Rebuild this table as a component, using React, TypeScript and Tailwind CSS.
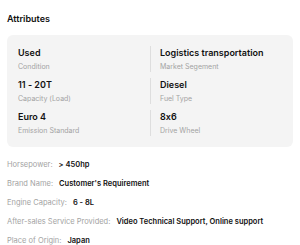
const specs = [
  { value: "Used", label: "Condition" },
  { value: "Logistics transportation", label: "Market Segement" },
  { value: "11 - 20T", label: "Capacity (Load)" },
  { value: "Diesel", label: "Fuel Type" },
  { value: "Euro 4", label: "Emission Standard" },
  { value: "8x6", label: "Drive Wheel" },
];

const details = [
  { label: "Horsepower:", value: "> 450hp" },
  { label: "Brand Name:", value: "Customer's Requirement" },
  { label: "Engine Capacity:", value: "6 - 8L" },
  { label: "After-sales Service Provided:", value: "Video Technical Support, Online support" },
  { label: "Place of Origin:", value: "Japan" },
];

export default function App() {
  return (
    <div className="w-[300px] h-[245px] overflow-hidden bg-white font-['Inter',sans-serif] [font-feature-settings:'calt'_0] text-[#111]">
      <h2 className="pl-[7px] pt-[13px] text-[9px] leading-[12px] font-semibold">Attributes</h2>

      <div className="mx-[7px] mt-[10px] rounded-[6px] bg-[#f4f4f4] p-[11px]">
        <div className="grid grid-cols-2 gap-y-[6px]">
          {specs.map((s, i) => (
            <div key={s.label} className={i % 2 === 1 ? "border-l border-[#dedede] pl-[9px]" : ""}>
              <p className="text-[9px] leading-[14px] font-semibold">{s.value}</p>
              <p className="mt-[2px] text-[7px] leading-[10px] text-[#a3a3a3]">{s.label}</p>
            </div>
          ))}
        </div>
      </div>

      <ul className="mt-[13px] pl-[7px] flex flex-col gap-[9px]">
        {details.map((d) => (
          <li key={d.label} className="flex gap-[6px] text-[7.5px] leading-[10px] whitespace-nowrap">
            <span className="text-[#a3a3a3]">{d.label}</span>
            <span className="font-semibold">{d.value}</span>
          </li>
        ))}
      </ul>
    </div>
  );
}
